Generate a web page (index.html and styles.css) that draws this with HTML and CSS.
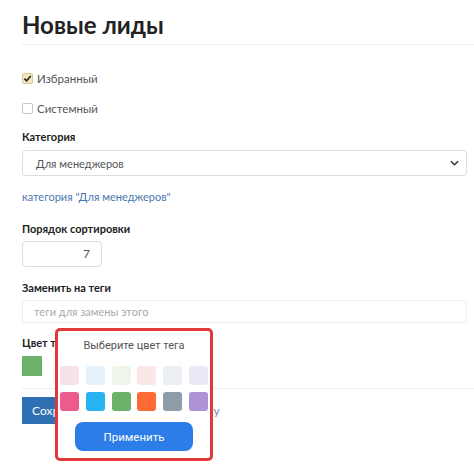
FILE: index.html
```html
<!DOCTYPE html>
<html lang="ru">
<head>
  <meta charset="UTF-8">
  <title>Новые лиды</title>
  <meta name="viewport" content="width=device-width, initial-scale=1">
  <link rel="stylesheet" href="styles.css">
</head>
<body>
  <div class="page">
    <h1>Новые лиды</h1>
    <hr class="divider">

    <label class="check-row first">
      <span class="check checked">
        <svg viewBox="0 0 10 10" width="9" height="9"><path d="M1.5 5.2 L4 7.6 L8.6 2.2" fill="none" stroke="#222" stroke-width="1.8"/></svg>
      </span>
      Избранный
    </label>
    <label class="check-row">
      <span class="check"></span>
      Системный
    </label>

    <div class="label">Категория</div>
    <div class="select">
      <span>Для менеджеров</span>
      <svg class="chevron" viewBox="0 0 10 6" width="9" height="6"><path d="M1 1 L5 5 L9 1" fill="none" stroke="#333" stroke-width="1.6"/></svg>
    </div>

    <a class="link" href="#">категория "Для менеджеров"</a>

    <div class="label sort-label">Порядок сортировки</div>
    <div class="number">7</div>

    <div class="label tags-label">Заменить на теги</div>
    <div class="text-input">теги для замены этого</div>

    <div class="color-field">
      <div class="label">Цвет тега</div>
      <div class="current-swatch"></div>

      <div class="picker">
        <div class="picker-title">Выберите цвет тега</div>
        <div class="swatches">
          <span class="swatch" style="background:#f8e2e9"></span>
          <span class="swatch" style="background:#e4f2fd"></span>
          <span class="swatch" style="background:#eef6ea"></span>
          <span class="swatch" style="background:#fbe7e6"></span>
          <span class="swatch" style="background:#eceff1"></span>
          <span class="swatch" style="background:#ede8f6"></span>
          <span class="swatch" style="background:#ec5a8e"></span>
          <span class="swatch" style="background:#29b3f3"></span>
          <span class="swatch" style="background:#6db26b"></span>
          <span class="swatch" style="background:#fe6b35"></span>
          <span class="swatch" style="background:#8c9da7"></span>
          <span class="swatch" style="background:#ae92d6"></span>
        </div>
        <button class="apply">Применить</button>
      </div>
    </div>

    <hr class="divider bottom">

    <div class="actions">
      <button class="save">Сохранить</button>
      <a class="back" href="#">Вернуться к списку</a>
    </div>
  </div>
</body>
</html>
```

FILE: styles.css
```css
html, body {
  height: 100%;
}
body {
  margin: 0;
  background: #fff;
  font-family: 'Lato', 'Roboto', sans-serif;
  font-size: 11px;
  color: #333;
}
.page {
  padding: 0 7px 0 22px;
  min-height: 473px;
  box-sizing: border-box;
}
h1 {
  margin: 10px 0 0;
  font-size: 24px;
  line-height: 30px;
  font-weight: 700;
  color: #222;
}
.divider {
  border: none;
  border-top: 1px solid #eee;
  margin: 4px -7px 0 0;
}
.check-row {
  display: flex;
  align-items: center;
  height: 20px;
  margin-top: 10px;
  font-size: 11.5px;
  color: #555;
}
.check-row.first {
  margin-top: 23px;
}
.check {
  width: 9px;
  height: 9px;
  border: 1px solid #c8c8c8;
  border-radius: 2px;
  margin-right: 4px;
  display: flex;
  align-items: center;
  justify-content: center;
}
.check.checked {
  background: #f6e7c1;
  border-color: #d9c79a;
}
.label {
  margin-top: 10px;
  line-height: 18px;
  font-weight: 700;
  color: #222;
}
.select {
  margin-top: 4px;
  height: 26px;
  box-sizing: border-box;
  border: 1px solid #ddd;
  border-radius: 4px;
  display: flex;
  align-items: center;
  justify-content: space-between;
  padding: 0 7px 0 13px;
  color: #555;
}
.link {
  display: block;
  margin-top: 12px;
  line-height: 18px;
  color: #4a78ae;
  text-decoration: none;
}
.sort-label {
  margin-top: 14px;
}
.number {
  margin-top: 3px;
  width: 80px;
  height: 26px;
  box-sizing: border-box;
  border: 1px solid #ddd;
  border-radius: 4px;
  text-align: right;
  padding-right: 11px;
  line-height: 24px;
  font-size: 12px;
  color: #555;
}
.tags-label {
  margin-top: 12px;
}
.text-input {
  margin-top: 3px;
  height: 23px;
  box-sizing: border-box;
  border: 1px solid #eee;
  border-radius: 3px;
  padding-left: 11px;
  line-height: 21px;
  color: #aaa;
}
.color-field {
  position: relative;
}
.color-field .label {
  margin-top: 11px;
}
.current-swatch {
  margin-top: 4px;
  width: 20px;
  height: 20px;
  background: #6db26b;
}
.divider.bottom {
  margin-top: 12px;
}
.actions {
  margin-top: 8px;
  display: flex;
  align-items: center;
  gap: 12px;
}
.save {
  height: 27px;
  padding: 0 10px;
  border: none;
  background: #2f6fb3;
  color: #fff;
  font-family: inherit;
  font-size: 12px;
}
.back {
  color: #6d87a5;
  font-size: 12px;
  text-decoration: none;
}
.picker {
  position: absolute;
  left: 33px;
  top: -6px;
  width: 158px;
  height: 133px;
  box-sizing: border-box;
  border: 3px solid #e1393b;
  border-radius: 5px;
  background: #fff;
  display: flex;
  flex-direction: column;
  align-items: center;
}
.picker-title {
  margin-top: 8px;
  font-family: 'Roboto', 'Liberation Sans', sans-serif;
  font-size: 11px;
  line-height: 14px;
  color: #555;
}
.swatches {
  margin-top: 13px;
  display: grid;
  grid-template-columns: repeat(6, 19px);
  column-gap: 6.8px;
  row-gap: 7px;
}
.swatch {
  width: 19px;
  height: 19px;
  border-radius: 3px;
}
.apply {
  margin-top: 11px;
  width: 118px;
  height: 29px;
  border: none;
  border-radius: 8px;
  background: #2c7de8;
  color: #fff;
  font-family: 'Roboto', 'Liberation Sans', sans-serif;
  font-size: 11.5px;
}
```
